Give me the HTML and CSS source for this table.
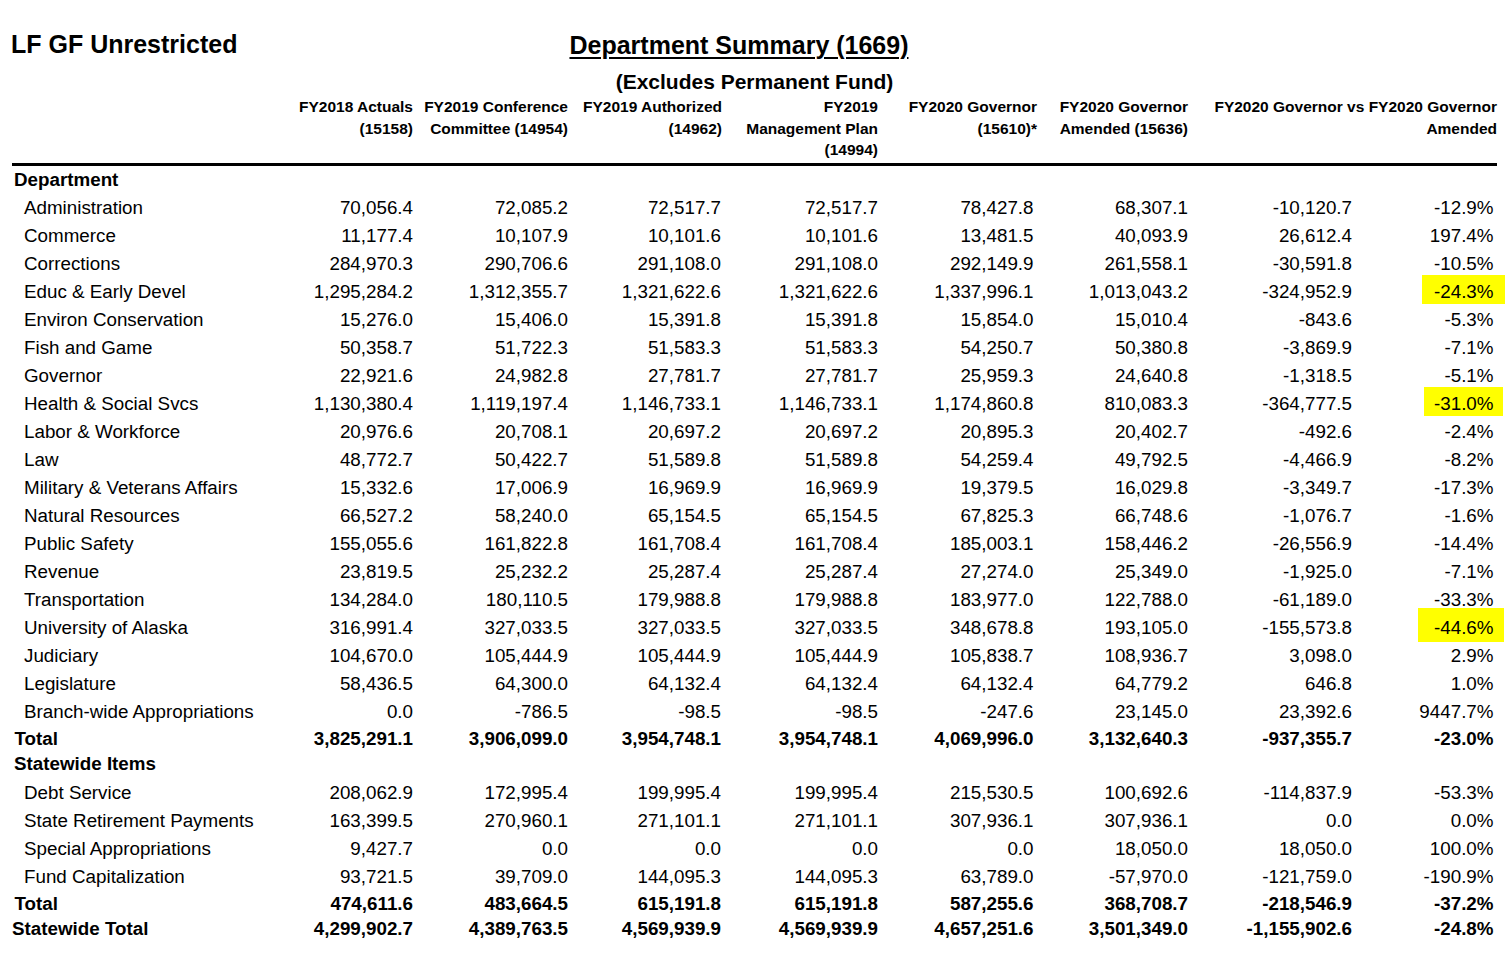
FILE: index.html
```html
<!DOCTYPE html>
<html lang="en">
<head>
<meta charset="utf-8">
<title>Department Summary (1669)</title>
<link rel="stylesheet" href="styles.css">
</head>
<body>
<div class="page">
  <div class="top">
    <div class="lf">LF GF Unrestricted</div>
    <div class="summary">Department Summary (1669)</div>
    <div></div>
  </div>
  <div class="sub">(Excludes Permanent Fund)</div>
  <table class="sheet">
    <colgroup>
      <col class="w-label"><col class="w1"><col class="w2"><col class="w3"><col class="w4"><col class="w5"><col class="w6"><col class="w7"><col class="w8">
    </colgroup>
    <thead>
      <tr>
        <th class="hlabel"></th>
        <th>FY2018 Actuals<br>(15158)</th>
        <th>FY2019 Conference<br>Committee (14954)</th>
        <th>FY2019 Authorized<br>(14962)</th>
        <th>FY2019<br>Management Plan<br>(14994)</th>
        <th>FY2020 Governor<br>(15610)*</th>
        <th>FY2020 Governor<br>Amended (15636)</th>
        <th colspan="2">FY2020 Governor vs FY2020 Governor<br>Amended</th>
      </tr>
    </thead>
    <tbody>
      <tr class="sec"><td class="lab">Department</td><td></td><td></td><td></td><td></td><td></td><td></td><td></td><td></td></tr>
      <tr class="data"><td class="lab">Administration</td><td>70,056.4</td><td>72,085.2</td><td class="c3">72,517.7</td><td>72,517.7</td><td class="c5">78,427.8</td><td>68,307.1</td><td>-10,120.7</td><td class="c8">-12.9%</td></tr>
      <tr class="data"><td class="lab">Commerce</td><td>11,177.4</td><td>10,107.9</td><td class="c3">10,101.6</td><td>10,101.6</td><td class="c5">13,481.5</td><td>40,093.9</td><td>26,612.4</td><td class="c8">197.4%</td></tr>
      <tr class="data"><td class="lab">Corrections</td><td>284,970.3</td><td>290,706.6</td><td class="c3">291,108.0</td><td>291,108.0</td><td class="c5">292,149.9</td><td>261,558.1</td><td>-30,591.8</td><td class="c8">-10.5%</td></tr>
      <tr class="data"><td class="lab">Educ &amp; Early Devel</td><td>1,295,284.2</td><td>1,312,355.7</td><td class="c3">1,321,622.6</td><td>1,321,622.6</td><td class="c5">1,337,996.1</td><td>1,013,043.2</td><td>-324,952.9</td><td class="c8"><span class="hl hl-a">-24.3%</span></td></tr>
      <tr class="data"><td class="lab">Environ Conservation</td><td>15,276.0</td><td>15,406.0</td><td class="c3">15,391.8</td><td>15,391.8</td><td class="c5">15,854.0</td><td>15,010.4</td><td>-843.6</td><td class="c8">-5.3%</td></tr>
      <tr class="data"><td class="lab">Fish and Game</td><td>50,358.7</td><td>51,722.3</td><td class="c3">51,583.3</td><td>51,583.3</td><td class="c5">54,250.7</td><td>50,380.8</td><td>-3,869.9</td><td class="c8">-7.1%</td></tr>
      <tr class="data"><td class="lab">Governor</td><td>22,921.6</td><td>24,982.8</td><td class="c3">27,781.7</td><td>27,781.7</td><td class="c5">25,959.3</td><td>24,640.8</td><td>-1,318.5</td><td class="c8">-5.1%</td></tr>
      <tr class="data"><td class="lab">Health &amp; Social Svcs</td><td>1,130,380.4</td><td>1,119,197.4</td><td class="c3">1,146,733.1</td><td>1,146,733.1</td><td class="c5">1,174,860.8</td><td>810,083.3</td><td>-364,777.5</td><td class="c8"><span class="hl hl-b">-31.0%</span></td></tr>
      <tr class="data"><td class="lab">Labor &amp; Workforce</td><td>20,976.6</td><td>20,708.1</td><td class="c3">20,697.2</td><td>20,697.2</td><td class="c5">20,895.3</td><td>20,402.7</td><td>-492.6</td><td class="c8">-2.4%</td></tr>
      <tr class="data"><td class="lab">Law</td><td>48,772.7</td><td>50,422.7</td><td class="c3">51,589.8</td><td>51,589.8</td><td class="c5">54,259.4</td><td>49,792.5</td><td>-4,466.9</td><td class="c8">-8.2%</td></tr>
      <tr class="data"><td class="lab">Military &amp; Veterans Affairs</td><td>15,332.6</td><td>17,006.9</td><td class="c3">16,969.9</td><td>16,969.9</td><td class="c5">19,379.5</td><td>16,029.8</td><td>-3,349.7</td><td class="c8">-17.3%</td></tr>
      <tr class="data"><td class="lab">Natural Resources</td><td>66,527.2</td><td>58,240.0</td><td class="c3">65,154.5</td><td>65,154.5</td><td class="c5">67,825.3</td><td>66,748.6</td><td>-1,076.7</td><td class="c8">-1.6%</td></tr>
      <tr class="data"><td class="lab">Public Safety</td><td>155,055.6</td><td>161,822.8</td><td class="c3">161,708.4</td><td>161,708.4</td><td class="c5">185,003.1</td><td>158,446.2</td><td>-26,556.9</td><td class="c8">-14.4%</td></tr>
      <tr class="data"><td class="lab">Revenue</td><td>23,819.5</td><td>25,232.2</td><td class="c3">25,287.4</td><td>25,287.4</td><td class="c5">27,274.0</td><td>25,349.0</td><td>-1,925.0</td><td class="c8">-7.1%</td></tr>
      <tr class="data"><td class="lab">Transportation</td><td>134,284.0</td><td>180,110.5</td><td class="c3">179,988.8</td><td>179,988.8</td><td class="c5">183,977.0</td><td>122,788.0</td><td>-61,189.0</td><td class="c8">-33.3%</td></tr>
      <tr class="data"><td class="lab">University of Alaska</td><td>316,991.4</td><td>327,033.5</td><td class="c3">327,033.5</td><td>327,033.5</td><td class="c5">348,678.8</td><td>193,105.0</td><td>-155,573.8</td><td class="c8"><span class="hl hl-c">-44.6%</span></td></tr>
      <tr class="data"><td class="lab">Judiciary</td><td>104,670.0</td><td>105,444.9</td><td class="c3">105,444.9</td><td>105,444.9</td><td class="c5">105,838.7</td><td>108,936.7</td><td>3,098.0</td><td class="c8">2.9%</td></tr>
      <tr class="data"><td class="lab">Legislature</td><td>58,436.5</td><td>64,300.0</td><td class="c3">64,132.4</td><td>64,132.4</td><td class="c5">64,132.4</td><td>64,779.2</td><td>646.8</td><td class="c8">1.0%</td></tr>
      <tr class="data"><td class="lab">Branch-wide Appropriations</td><td>0.0</td><td>-786.5</td><td class="c3">-98.5</td><td>-98.5</td><td class="c5">-247.6</td><td>23,145.0</td><td>23,392.6</td><td class="c8">9447.7%</td></tr>
      <tr class="total"><td class="lab">Total</td><td>3,825,291.1</td><td>3,906,099.0</td><td class="c3">3,954,748.1</td><td>3,954,748.1</td><td class="c5">4,069,996.0</td><td>3,132,640.3</td><td>-937,355.7</td><td class="c8">-23.0%</td></tr>
      <tr class="sec sec-after"><td class="lab">Statewide Items</td><td></td><td></td><td></td><td></td><td></td><td></td><td></td><td></td></tr>
      <tr class="data"><td class="lab">Debt Service</td><td>208,062.9</td><td>172,995.4</td><td class="c3">199,995.4</td><td>199,995.4</td><td class="c5">215,530.5</td><td>100,692.6</td><td>-114,837.9</td><td class="c8">-53.3%</td></tr>
      <tr class="data"><td class="lab">State Retirement Payments</td><td>163,399.5</td><td>270,960.1</td><td class="c3">271,101.1</td><td>271,101.1</td><td class="c5">307,936.1</td><td>307,936.1</td><td>0.0</td><td class="c8">0.0%</td></tr>
      <tr class="data"><td class="lab">Special Appropriations</td><td>9,427.7</td><td>0.0</td><td class="c3">0.0</td><td>0.0</td><td class="c5">0.0</td><td>18,050.0</td><td>18,050.0</td><td class="c8">100.0%</td></tr>
      <tr class="data"><td class="lab">Fund Capitalization</td><td>93,721.5</td><td>39,709.0</td><td class="c3">144,095.3</td><td>144,095.3</td><td class="c5">63,789.0</td><td>-57,970.0</td><td>-121,759.0</td><td class="c8">-190.9%</td></tr>
      <tr class="total"><td class="lab">Total</td><td>474,611.6</td><td>483,664.5</td><td class="c3">615,191.8</td><td>615,191.8</td><td class="c5">587,255.6</td><td>368,708.7</td><td>-218,546.9</td><td class="c8">-37.2%</td></tr>
      <tr class="grand"><td class="lab">Statewide Total</td><td>4,299,902.7</td><td>4,389,763.5</td><td class="c3">4,569,939.9</td><td>4,569,939.9</td><td class="c5">4,657,251.6</td><td>3,501,349.0</td><td>-1,155,902.6</td><td class="c8">-24.8%</td></tr>
    </tbody>
  </table>
</div>
</body>
</html>
```
FILE: styles.css
```css
html, body {
  margin: 0;
  padding: 0;
  background: #ffffff;
}

body {
  font-family: "Liberation Sans", Arial, sans-serif;
  color: #000000;
}

.page {
  width: 1485px;
  padding: 30px 15px 0 12px;
}

.top {
  display: grid;
  grid-template-columns: 1fr auto 1fr;
  align-items: baseline;
  font-size: 25px;
  font-weight: bold;
  line-height: 30px;
}

.lf {
  margin-left: -1px;
  position: relative;
  top: -1px;
}

.summary {
  text-decoration: underline;
  text-decoration-thickness: 2px;
  text-underline-offset: 3px;
  margin-right: 31px;
}

.sub {
  margin-top: 10px;
  text-align: center;
  font-size: 21px;
  font-weight: bold;
  line-height: 24px;
}

.sheet {
  margin-top: 2px;
  width: 1485px;
  table-layout: fixed;
  border-collapse: separate;
  border-spacing: 0;
  font-size: 18.8px;
}

.w-label { width: 258px; }
.w1 { width: 143px; }
.w2 { width: 155px; }
.w3 { width: 154px; }
.w4 { width: 156px; }
.w5 { width: 159px; }
.w6 { width: 151px; }
.w7 { width: 164px; }
.w8 { width: 145px; }

.sheet th {
  font-size: 15.5px;
  font-weight: bold;
  line-height: 21.5px;
  text-align: right;
  vertical-align: top;
  white-space: nowrap;
  padding: 0 0 2.5px 0;
  border-bottom: 3px solid #000000;
}

.sheet td {
  padding: 0;
  text-align: right;
  white-space: nowrap;
  vertical-align: top;
}

.sheet td.lab {
  text-align: left;
  padding-left: 12px;
}

.sheet td.c3 { padding-right: 1px; }
.sheet td.c5 { padding-right: 3.5px; }
.sheet td.c8 { padding-right: 3.5px; }

.data td {
  line-height: 28px;
}

.sec td {
  font-weight: bold;
  line-height: 25px;
  padding-top: 1px;
  padding-bottom: 2px;
}

.sec-after td {
  padding-top: 0;
  padding-bottom: 3px;
}

.sec td.lab {
  padding-left: 2px;
}

.total td {
  font-weight: bold;
  line-height: 24px;
  padding-top: 1px;
}

.total td.lab {
  padding-left: 2.5px;
}

.grand td {
  font-weight: bold;
  line-height: 26px;
}

.grand td.lab {
  padding-left: 0;
}

.hl {
  background: #ffff00;
}

.hl-a {
  padding: 6px 11.5px 2px 12px;
  margin: 0 -11.5px 0 -12px;
}

.hl-b {
  padding: 6px 9.5px 2px 10px;
  margin: 0 -9.5px 0 -10px;
}

.hl-c {
  padding: 9px 10.5px 4px 16px;
  margin: 0 -10.5px 0 -16px;
}
```
